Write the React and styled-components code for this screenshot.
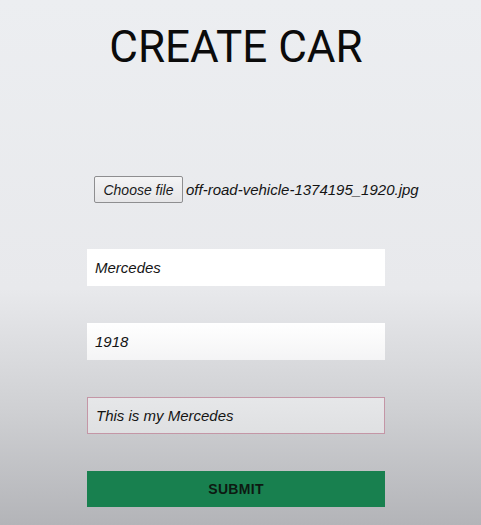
import styled, { createGlobalStyle } from "styled-components";

const GlobalStyle = createGlobalStyle`
  html, body {
    margin: 0;
    padding: 0;
  }
  body {
    font-family: "Liberation Sans", Arial, sans-serif;
  }
`;

const App = () => {
  return (
    <Page>
      <GlobalStyle />
      <Form onSubmit={(e) => e.preventDefault()}>
        <Title>CREATE CAR</Title>
        <FileRow>
          <FileButton type="button">Choose file</FileButton>
          <FileName>off-road-vehicle-1374195_1920.jpg</FileName>
        </FileRow>
        <Field defaultValue="Mercedes" />
        <Field defaultValue="1918" $shade />
        <Field defaultValue="This is my Mercedes" $focused />
        <Submit type="submit">SUBMIT</Submit>
      </Form>
    </Page>
  );
};

const Page = styled.div`
  min-height: 525px;
  box-sizing: border-box;
  background: linear-gradient(
    180deg,
    #eceef1 0%,
    #e8e9ec 55%,
    #cfd0d3 78%,
    #b3b4b8 100%
  );
  padding: 21px 0 17px 87px;
`;

const Form = styled.form`
  width: 298px;
  display: flex;
  flex-direction: column;
`;

const Title = styled.h1`
  margin: 0 0 103px;
  font-family: Roboto, "Liberation Sans", sans-serif;
  font-weight: 400;
  font-size: 44px;
  line-height: 52px;
  text-align: center;
  color: #0b0b0b;
`;

const FileRow = styled.div`
  display: flex;
  align-items: center;
  gap: 3px;
  padding-left: 7px;
  margin-bottom: 46px;
  white-space: nowrap;
`;

const FileButton = styled.button`
  flex: none;
  height: 27px;
  width: 89px;
  padding: 0;
  box-sizing: border-box;
  border: 1px solid #8e8e90;
  border-radius: 2px;
  background: linear-gradient(#f4f4f5, #e6e6e8);
  font-family: "Liberation Sans", Arial, sans-serif;
  font-style: italic;
  font-size: 14px;
  color: #1a1a1a;
`;

const FileName = styled.span`
  font-style: italic;
  font-size: 15px;
  color: #141414;
`;

const Field = styled.input`
  height: 37px;
  box-sizing: border-box;
  margin-bottom: 37px;
  padding: 0 8px;
  border: ${(p) => (p.$focused ? "1px solid #c496a6" : "none")};
  outline: none;
  background: ${(p) =>
    p.$focused
      ? "linear-gradient(#e6e7e9, #dfe0e2)"
      : p.$shade
      ? "linear-gradient(#ffffff, #f4f4f5)"
      : "#ffffff"};
  font-family: "Liberation Sans", Arial, sans-serif;
  font-style: italic;
  font-size: 15px;
  color: #141414;
`;

const Submit = styled.button`
  height: 36px;
  border: none;
  background: #18804f;
  font-family: "Liberation Sans", Arial, sans-serif;
  font-weight: 700;
  font-size: 14px;
  letter-spacing: 0.3px;
  color: #0d1a12;
  cursor: pointer;
`;

export default App;
